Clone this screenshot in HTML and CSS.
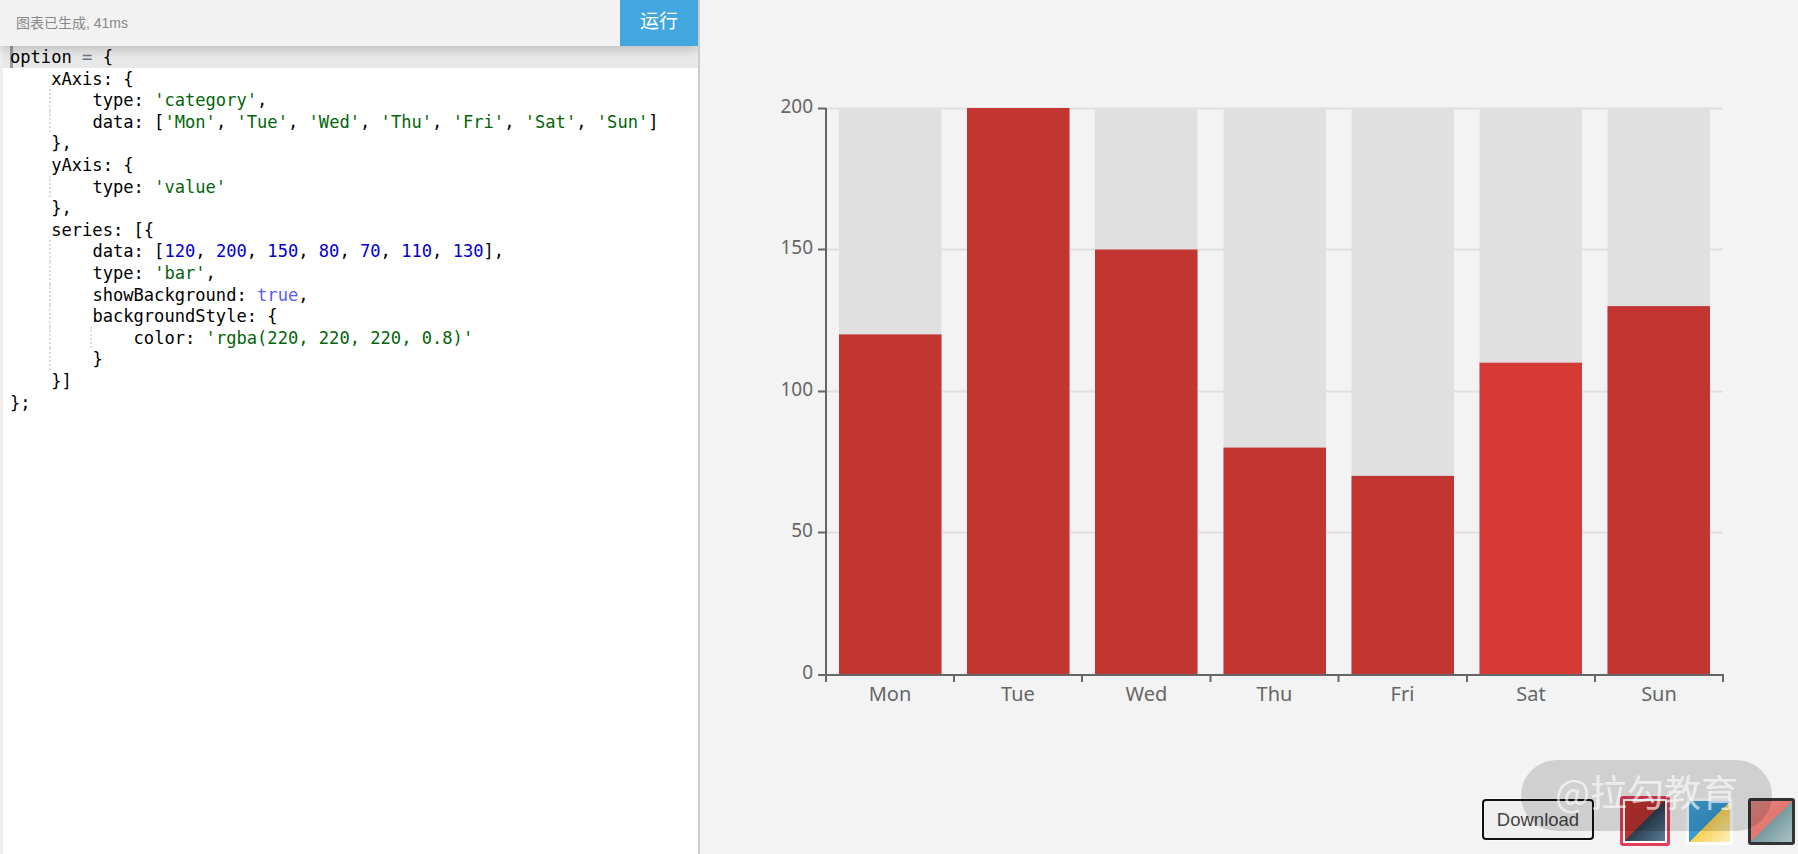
FILE: index.html
```html
<!DOCTYPE html>
<html lang="en">
<head>
    <meta charset="UTF-8">
    <meta name="viewport" content="width=device-width, initial-scale=1.0">
    <title>ECharts Editor</title>
    <link rel="stylesheet" href="styles.css">
</head>
<body>
    <div class="page">
        <div class="left-panel">
            <div class="status-bar">
                <span class="status-text">图表已生成, 41ms</span>
                <button class="run-btn">运行</button>
            </div>
            <div class="editor">
                <div class="line active">option <span class="op">=</span> {</div>
                <div class="line"><span class="ind"></span>xAxis: {</div>
                <div class="line"><span class="ind guide"></span><span class="ind"></span>type: <span class="str">'category'</span>,</div>
                <div class="line"><span class="ind guide"></span><span class="ind"></span>data: [<span class="str">'Mon'</span>, <span class="str">'Tue'</span>, <span class="str">'Wed'</span>, <span class="str">'Thu'</span>, <span class="str">'Fri'</span>, <span class="str">'Sat'</span>, <span class="str">'Sun'</span>]</div>
                <div class="line"><span class="ind"></span>},</div>
                <div class="line"><span class="ind"></span>yAxis: {</div>
                <div class="line"><span class="ind guide"></span><span class="ind"></span>type: <span class="str">'value'</span></div>
                <div class="line"><span class="ind"></span>},</div>
                <div class="line"><span class="ind"></span>series: [{</div>
                <div class="line"><span class="ind guide"></span><span class="ind"></span>data: [<span class="num">120</span>, <span class="num">200</span>, <span class="num">150</span>, <span class="num">80</span>, <span class="num">70</span>, <span class="num">110</span>, <span class="num">130</span>],</div>
                <div class="line"><span class="ind guide"></span><span class="ind"></span>type: <span class="str">'bar'</span>,</div>
                <div class="line"><span class="ind guide"></span><span class="ind"></span>showBackground: <span class="bool">true</span>,</div>
                <div class="line"><span class="ind guide"></span><span class="ind"></span>backgroundStyle: {</div>
                <div class="line"><span class="ind guide"></span><span class="ind guide"></span><span class="ind"></span>color: <span class="str">'rgba(220, 220, 220, 0.8)'</span></div>
                <div class="line"><span class="ind guide"></span><span class="ind"></span>}</div>
                <div class="line"><span class="ind"></span>}]</div>
                <div class="line">};</div>
            </div>
        </div>

        <div class="chart-panel">
            <svg class="chart" width="1098" height="796" viewBox="700 0 1098 796">
                <!-- grid lines -->
                <g class="grid">
                    <line x1="826" y1="108.5" x2="1723" y2="108.5"/>
                    <line x1="826" y1="249.5" x2="1723" y2="249.5"/>
                    <line x1="826" y1="391.5" x2="1723" y2="391.5"/>
                    <line x1="826" y1="532.5" x2="1723" y2="532.5"/>
                </g>

                <!-- background bars -->
                <g class="bar-bg">
                    <rect x="839" y="108" width="102.5" height="566"/>
                    <rect x="967" y="108" width="102.5" height="566"/>
                    <rect x="1095" y="108" width="102.5" height="566"/>
                    <rect x="1223.5" y="108" width="102.5" height="566"/>
                    <rect x="1351.5" y="108" width="102.5" height="566"/>
                    <rect x="1479.5" y="108" width="102.5" height="566"/>
                    <rect x="1607.5" y="108" width="102.5" height="566"/>
                </g>

                <!-- values -->
                <g class="bar">
                    <rect x="839" y="334.4" width="102.5" height="339.6"/>
                    <rect x="967" y="108" width="102.5" height="566"/>
                    <rect x="1095" y="249.5" width="102.5" height="424.5"/>
                    <rect x="1223.5" y="447.6" width="102.5" height="226.4"/>
                    <rect x="1351.5" y="475.9" width="102.5" height="198.1"/>
                    <rect class="hover" x="1479.5" y="362.7" width="102.5" height="311.3"/>
                    <rect x="1607.5" y="306.1" width="102.5" height="367.9"/>
                </g>

                <!-- axes -->
                <g class="axis">
                    <line x1="826" y1="108" x2="826" y2="682"/>
                    <line x1="818" y1="675" x2="1724" y2="675"/>
                    <line x1="818" y1="108.5" x2="826" y2="108.5"/>
                    <line x1="818" y1="249.5" x2="826" y2="249.5"/>
                    <line x1="818" y1="391.5" x2="826" y2="391.5"/>
                    <line x1="818" y1="532.5" x2="826" y2="532.5"/>
                    <line x1="954" y1="675" x2="954" y2="682"/>
                    <line x1="1082" y1="675" x2="1082" y2="682"/>
                    <line x1="1210.5" y1="675" x2="1210.5" y2="682"/>
                    <line x1="1338.5" y1="675" x2="1338.5" y2="682"/>
                    <line x1="1467" y1="675" x2="1467" y2="682"/>
                    <line x1="1595" y1="675" x2="1595" y2="682"/>
                    <line x1="1723" y1="675" x2="1723" y2="682"/>
                </g>

                <g class="y-labels">
                    <text x="813" y="113">200</text>
                    <text x="813" y="254">150</text>
                    <text x="813" y="396">100</text>
                    <text x="813" y="537">50</text>
                    <text x="813" y="679">0</text>
                </g>
                <g class="x-labels">
                    <text x="890" y="701">Mon</text>
                    <text x="1018" y="701">Tue</text>
                    <text x="1146.5" y="701">Wed</text>
                    <text x="1274.5" y="701">Thu</text>
                    <text x="1402.5" y="701">Fri</text>
                    <text x="1531" y="701">Sat</text>
                    <text x="1659" y="701">Sun</text>
                </g>
            </svg>

            <div class="toolbar">
                <button class="download-btn">Download</button>
                <span class="swatch swatch-red selected"><i></i></span>
                <span class="swatch swatch-blue"><i></i></span>
                <span class="swatch swatch-dark"><i></i></span>
            </div>

            <div class="watermark">@拉勾教育</div>
        </div>
    </div>
</body>
</html>
```

FILE: styles.css
```css
/* Page */
html, body {
    margin: 0;
    padding: 0;
    height: 100%;
    overflow: hidden;
}

body {
    font-family: "Liberation Sans", "Noto Sans CJK SC", sans-serif;
    background: #f3f3f3;
}

.page {
    display: flex;
    height: 854px;
}

/* Left panel */
.left-panel {
    width: 698px;
    flex: none;
    display: flex;
    flex-direction: column;
    background: #fff;
    border-right: 2px solid #ccc;
    overflow: hidden;
}

.status-bar {
    position: relative;
    z-index: 2;
    flex: none;
    height: 46px;
    display: flex;
    align-items: center;
    justify-content: space-between;
    padding-left: 16px;
    background: #f2f2f2;
    box-shadow: 0 2px 12px rgba(0, 0, 0, 0.22);
}

.status-text {
    font-size: 14px;
    color: #888;
    margin-bottom: 2px;
}

.run-btn {
    width: 78px;
    height: 46px;
    padding: 0 0 8px;
    border: none;
    background: #41a7de;
    color: #fff;
    font-family: "Noto Sans CJK SC", sans-serif;
    font-size: 19px;
}

/* Editor */
.editor {
    flex: 1;
    border-left: 3px solid #eee;
    padding-left: 7px;
    font-family: "DejaVu Sans Mono", monospace;
    font-size: 17.1px;
    color: #000;
}

.line {
    display: flex;
    height: 21.6px;
    line-height: 23px;
    white-space: pre;
}

.line.active {
    position: relative;
    isolation: isolate;
    display: block;
    margin-left: -7px;
    padding-left: 7px;
    background: #e8e8e8;
}

/* cursor */
.line.active::before {
    content: "";
    position: absolute;
    z-index: -1;
    left: 7px;
    top: 0;
    width: 3px;
    height: 100%;
    background: #999;
}

.ind {
    flex: none;
    width: 41.2px;
    box-sizing: border-box;
}

.ind.guide {
    border-right: 2px dotted #ddd;
}

.op { color: #687687; }
.str { color: #03640a; }
.num { color: #0000cd; }
.bool { color: #585cf6; }

/* Chart */
.chart-panel {
    position: relative;
    flex: 1;
    display: flex;
    flex-direction: column;
}

.chart {
    display: block;
    flex: none;
}

.grid line {
    stroke: #e0e0e0;
    stroke-width: 2;
}

.bar-bg rect {
    fill: #e0e0e0;
}

.bar rect {
    fill: #c23531;
}

.bar rect.hover {
    fill: #d53a35;
}

.axis line {
    stroke: #666;
    stroke-width: 2;
}

.y-labels text, .x-labels text {
    font-family: "Noto Sans", sans-serif;
    font-size: 19px;
    fill: #666;
}

.y-labels text {
    text-anchor: end;
}

.x-labels text {
    font-size: 20px;
    text-anchor: middle;
}

/* Theme controls */
.toolbar {
    display: flex;
    align-items: center;
    justify-content: flex-end;
    height: 50px;
    padding-right: 3px;
}

.download-btn {
    width: 112px;
    height: 41px;
    margin: 0 26px 3px 0;
    padding: 0;
    border: 2px solid #111;
    border-radius: 4px;
    background: #f0f0f0;
    box-shadow: 0 0 0 1px rgba(255, 255, 255, 0.6);
    color: #444;
    font-family: "Liberation Sans", sans-serif;
    font-size: 18.5px;
}

.swatch {
    display: block;
    box-sizing: border-box;
    width: 47px;
    height: 47px;
    margin-left: 15px;
    border: 3px solid #fff;
    border-radius: 3px;
}

.swatch i {
    display: block;
    width: 100%;
    height: 100%;
}

.swatch.selected {
    width: 50px;
    height: 50px;
    margin-left: 0;
    padding: 2px;
    border-color: #e43c59;
    background: #fff;
    margin-right: 1px;
}

.swatch-red i {
    background: linear-gradient(135deg, #c23531 0, #b5322e 50%, #2b3f50 50%, #5a7d96 100%);
}

.swatch-blue i {
    background: linear-gradient(135deg, #3fa7dc 0, #3a9ad0 50%, #f8d050 50%, #fff0c0 100%);
}

.swatch-dark {
    border-color: #333;
}

.swatch-dark i {
    background: linear-gradient(135deg, #dd8a86 0, #e4756e 50%, #759aa0 50%, #adc2c2 100%);
}

/* Watermark lies over the controls */
.watermark {
    position: absolute;
    left: 821px;
    top: 760px;
    width: 251px;
    height: 71px;
    border-radius: 36px;
    background: rgba(0, 0, 0, 0.14);
    color: rgba(255, 255, 255, 0.65);
    font-family: "Noto Sans CJK SC", sans-serif;
    font-size: 37px;
    line-height: 62px;
    text-align: center;
}
```
